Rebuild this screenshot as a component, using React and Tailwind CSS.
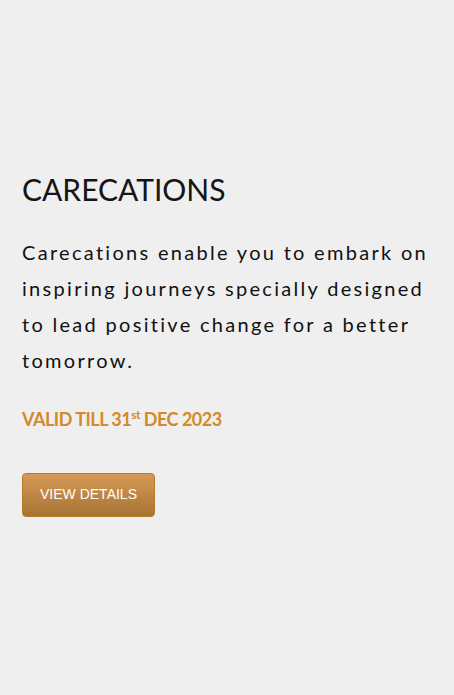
export default function App()
{
    return (
        <div className="min-h-[695px] w-full bg-[#efefef] flex flex-col justify-center px-[22px] font-['Lato','Open_Sans',sans-serif] text-[#111]">
            <div className="-mt-[10px]">
                <h1 className="text-[30px] leading-[40px] text-[#151515]">CARECATIONS</h1>
                <p className="mt-[25px] text-[20px] leading-[36px] tracking-[2.3px] text-[#111]">
                    Carecations enable you to embark on inspiring journeys specially designed to lead positive change for a better tomorrow.
                </p>
                <p className="mt-[28px] text-[18px] font-bold text-[#d38a2b] tracking-[-0.5px]">
                    VALID TILL 31<sup className="text-[12px] relative -top-[7px]">st</sup> DEC 2023
                </p>
                <button className="mt-[40px] w-[133px] h-[44px] rounded-[4px] border border-[#b87b22] bg-gradient-to-b from-[#d69a56] to-[#a77334] text-white text-[14px] font-['Liberation_Sans',Arial,sans-serif]">
                    VIEW DETAILS
                </button>
            </div>
        </div>
    );
}
